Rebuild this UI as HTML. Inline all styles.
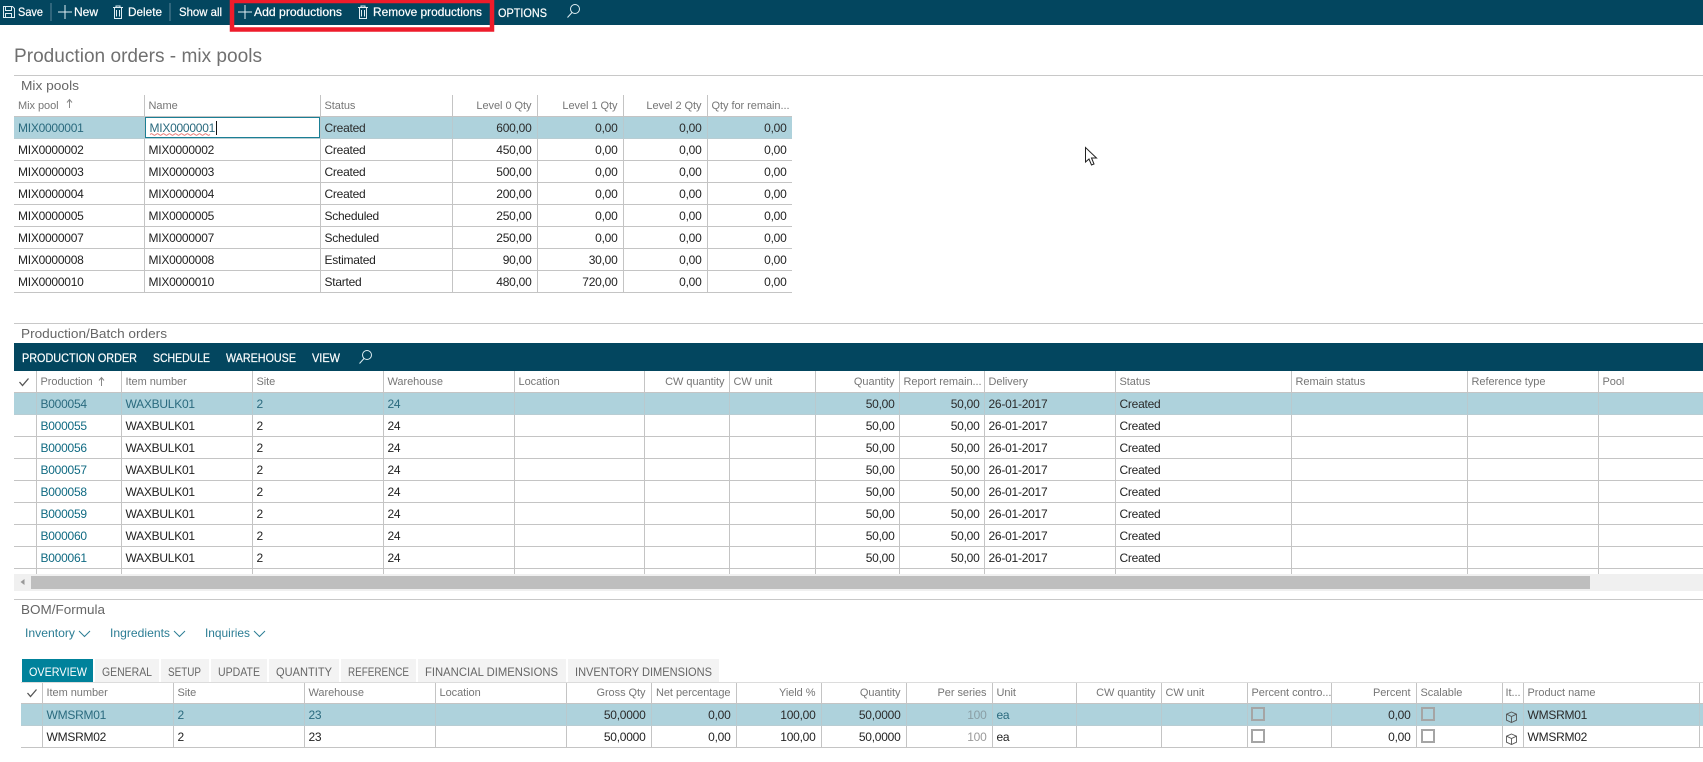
<!DOCTYPE html>
<html><head><meta charset="utf-8"><title>Production orders - mix pools</title>
<style>
html,body{margin:0;padding:0;width:1703px;height:762px;overflow:hidden;background:#fff;font-family:"Liberation Sans",sans-serif}
.w{position:absolute;overflow:hidden}
table{border-collapse:collapse;table-layout:fixed;font-size:12px;letter-spacing:-.25px;color:#222}
th{font-weight:normal;font-size:11px;letter-spacing:-.05px;color:#767676;text-align:left;height:21px;padding:0 5px 0 4px;border-right:1px solid #c4c4c4;border-bottom:1px solid #c4c4c4;white-space:nowrap;overflow:hidden}
td{height:20px;padding:1px 5px 0 4px;border-right:1px solid #c4c4c4;border-bottom:1px solid #c4c4c4;white-space:nowrap;overflow:hidden}
.b th{height:20px}
.b td{height:21px;padding-top:0}
.p .r{padding-right:4px}
.r{text-align:right}
.s td{background:#aed2dc;color:#2a6a7e;border-bottom-color:#b8cdd3;border-right-color:#b9c9ce}
.s td.k{color:#2a2a2a}
.l{color:#0f6a82}
.g{color:#9a9a9a}
.s .g{color:#8a9ea5}
svg{position:absolute;left:0;top:0}
</style></head><body>

<div class="w" style="left:14px;top:95px;width:778px;height:198px">
<table style="width:778px">
<col style="width:130px"><col style="width:176px"><col style="width:132px"><col style="width:85px"><col style="width:86px"><col style="width:84px"><col style="width:85px">
<tr><th>Mix pool</th><th>Name</th><th>Status</th><th class="r">Level 0 Qty</th><th class="r">Level 1 Qty</th><th class="r">Level 2 Qty</th><th class="r">Qty for remain...</th></tr>
<tr class="s"><td>MIX0000001</td><td style="background:#fff;box-shadow:inset 0 0 0 1px #1b7f95;color:#2a6a7e;padding-left:5px">MIX0000001</td><td class="k">Created</td><td class="r k">600,00</td><td class="r k">0,00</td><td class="r k">0,00</td><td class="r k">0,00</td></tr>
<tr><td>MIX0000002</td><td>MIX0000002</td><td>Created</td><td class="r">450,00</td><td class="r">0,00</td><td class="r">0,00</td><td class="r">0,00</td></tr>
<tr><td>MIX0000003</td><td>MIX0000003</td><td>Created</td><td class="r">500,00</td><td class="r">0,00</td><td class="r">0,00</td><td class="r">0,00</td></tr>
<tr><td>MIX0000004</td><td>MIX0000004</td><td>Created</td><td class="r">200,00</td><td class="r">0,00</td><td class="r">0,00</td><td class="r">0,00</td></tr>
<tr><td>MIX0000005</td><td>MIX0000005</td><td>Scheduled</td><td class="r">250,00</td><td class="r">0,00</td><td class="r">0,00</td><td class="r">0,00</td></tr>
<tr><td>MIX0000007</td><td>MIX0000007</td><td>Scheduled</td><td class="r">250,00</td><td class="r">0,00</td><td class="r">0,00</td><td class="r">0,00</td></tr>
<tr><td>MIX0000008</td><td>MIX0000008</td><td>Estimated</td><td class="r">90,00</td><td class="r">30,00</td><td class="r">0,00</td><td class="r">0,00</td></tr>
<tr><td>MIX0000010</td><td>MIX0000010</td><td>Started</td><td class="r">480,00</td><td class="r">720,00</td><td class="r">0,00</td><td class="r">0,00</td></tr>
</table></div>

<div class="w" style="left:14px;top:371px;width:1689px;height:203px">
<table class="p" style="width:1705px">
<col style="width:22px"><col style="width:85px"><col style="width:131px"><col style="width:131px"><col style="width:131px"><col style="width:130px"><col style="width:85px"><col style="width:86px"><col style="width:84px"><col style="width:85px"><col style="width:131px"><col style="width:176px"><col style="width:176px"><col style="width:131px"><col style="width:121px">
<tr><th></th><th>Production</th><th>Item number</th><th>Site</th><th>Warehouse</th><th>Location</th><th class="r">CW quantity</th><th>CW unit</th><th class="r">Quantity</th><th class="r">Report remain...</th><th>Delivery</th><th>Status</th><th>Remain status</th><th>Reference type</th><th>Pool</th></tr>
<tr class="s"><td></td><td>B000054</td><td>WAXBULK01</td><td>2</td><td>24</td><td></td><td></td><td></td><td class="r k">50,00</td><td class="r k">50,00</td><td class="k">26-01-2017</td><td class="k">Created</td><td></td><td></td><td></td></tr>
<tr><td></td><td class="l">B000055</td><td>WAXBULK01</td><td>2</td><td>24</td><td></td><td></td><td></td><td class="r">50,00</td><td class="r">50,00</td><td>26-01-2017</td><td>Created</td><td></td><td></td><td></td></tr>
<tr><td></td><td class="l">B000056</td><td>WAXBULK01</td><td>2</td><td>24</td><td></td><td></td><td></td><td class="r">50,00</td><td class="r">50,00</td><td>26-01-2017</td><td>Created</td><td></td><td></td><td></td></tr>
<tr><td></td><td class="l">B000057</td><td>WAXBULK01</td><td>2</td><td>24</td><td></td><td></td><td></td><td class="r">50,00</td><td class="r">50,00</td><td>26-01-2017</td><td>Created</td><td></td><td></td><td></td></tr>
<tr><td></td><td class="l">B000058</td><td>WAXBULK01</td><td>2</td><td>24</td><td></td><td></td><td></td><td class="r">50,00</td><td class="r">50,00</td><td>26-01-2017</td><td>Created</td><td></td><td></td><td></td></tr>
<tr><td></td><td class="l">B000059</td><td>WAXBULK01</td><td>2</td><td>24</td><td></td><td></td><td></td><td class="r">50,00</td><td class="r">50,00</td><td>26-01-2017</td><td>Created</td><td></td><td></td><td></td></tr>
<tr><td></td><td class="l">B000060</td><td>WAXBULK01</td><td>2</td><td>24</td><td></td><td></td><td></td><td class="r">50,00</td><td class="r">50,00</td><td>26-01-2017</td><td>Created</td><td></td><td></td><td></td></tr>
<tr><td></td><td class="l">B000061</td><td>WAXBULK01</td><td>2</td><td>24</td><td></td><td></td><td></td><td class="r">50,00</td><td class="r">50,00</td><td>26-01-2017</td><td>Created</td><td></td><td></td><td></td></tr>
<tr><td></td><td></td><td></td><td></td><td></td><td></td><td></td><td></td><td></td><td></td><td></td><td></td><td></td><td></td><td></td></tr>
</table></div>

<div class="w" style="left:21px;top:682px;width:1682px;height:68px;border-top:1px solid #dcdcdc;box-sizing:border-box">
<table class="b" style="width:1700px">
<col style="width:21px"><col style="width:131px"><col style="width:131px"><col style="width:131px"><col style="width:131px"><col style="width:85px"><col style="width:85px"><col style="width:85px"><col style="width:85px"><col style="width:86px"><col style="width:84px"><col style="width:85px"><col style="width:86px"><col style="width:84px"><col style="width:85px"><col style="width:86px"><col style="width:21px"><col style="width:176px"><col style="width:22px">
<tr><th></th><th>Item number</th><th>Site</th><th>Warehouse</th><th>Location</th><th class="r">Gross Qty</th><th class="r">Net percentage</th><th class="r">Yield %</th><th class="r">Quantity</th><th class="r">Per series</th><th>Unit</th><th class="r">CW quantity</th><th>CW unit</th><th>Percent contro...</th><th class="r">Percent</th><th>Scalable</th><th style="padding:0 3px">It...</th><th>Product name</th><th style="padding:0"></th></tr>
<tr class="s"><td></td><td>WMSRM01</td><td>2</td><td>23</td><td></td><td class="r k">50,0000</td><td class="r k">0,00</td><td class="r k">100,00</td><td class="r k">50,0000</td><td class="r g">100</td><td>ea</td><td></td><td></td><td></td><td class="r k">0,00</td><td></td><td style="padding:0"></td><td class="k">WMSRM01</td><td style="padding:0"></td></tr>
<tr><td></td><td>WMSRM02</td><td>2</td><td>23</td><td></td><td class="r">50,0000</td><td class="r">0,00</td><td class="r">100,00</td><td class="r">50,0000</td><td class="r g">100</td><td>ea</td><td></td><td></td><td></td><td class="r">0,00</td><td></td><td style="padding:0"></td><td>WMSRM02</td><td style="padding:0"></td></tr>
</table></div>

<svg width="1703" height="762" viewBox="0 0 1703 762" font-family="'Liberation Sans',sans-serif" font-size="12">
<!-- top bar -->
<rect width="1703" height="25" fill="#03465f"/>
<g fill="none" stroke="#dfeef3" stroke-width="1">
<path d="M3.5 6.5h9l2 2v9h-11z"/><path d="M5.5 6.5v4h6v-4M5.5 17.5v-4h6v4"/>
<path d="M58 12h14M65 5v14"/>
<path d="M113 7.5h10M116 7.5v-1.5h4v1.5M114.5 7.5v11h7v-11M116.5 10v6.5M119.5 10v6.5"/>
<path d="M238 12h14M245 5v14"/>
<path d="M358 7.5h10M361 7.5v-1.5h4v1.5M359.5 7.5v11h7v-11M361.5 10v6.5M364.5 10v6.5"/>
<circle cx="575" cy="9" r="4.5"/><path d="M572 12.5l-4.5 5"/>
</g>
<path d="M51 3v18M170 3v18" stroke="#5d8698" stroke-width="1"/>
<g fill="#fff" stroke="#fff" stroke-width=".2">
<text x="18" y="16" textLength="25" lengthAdjust="spacingAndGlyphs">Save</text>
<text x="74" y="16" textLength="24" lengthAdjust="spacingAndGlyphs">New</text>
<text x="128" y="16" textLength="34" lengthAdjust="spacingAndGlyphs">Delete</text>
<text x="179" y="16" textLength="43" lengthAdjust="spacingAndGlyphs">Show all</text>
<text x="254" y="16" textLength="88" lengthAdjust="spacingAndGlyphs">Add productions</text>
<text x="373" y="16" textLength="109" lengthAdjust="spacingAndGlyphs">Remove productions</text>
<text x="498" y="17" textLength="49" lengthAdjust="spacingAndGlyphs">OPTIONS</text>
</g>
<!-- red highlight -->
<rect x="230" y="25" width="264" height="2" fill="#fff"/>
<path d="M232 1h260v28.500h-260z" fill="none" stroke="#ee1c2b" stroke-width="4.500"/>
<!-- title/sections -->
<text x="14" y="62" font-size="19" fill="#707070" textLength="248" lengthAdjust="spacingAndGlyphs">Production orders - mix pools</text>
<rect x="14" y="75" width="1689" height="1" fill="#c8c8c8"/>
<text x="21" y="90" font-size="13" fill="#666" textLength="58" lengthAdjust="spacingAndGlyphs">Mix pools</text>
<path d="M69.500 108V100M67 102.500l2.500-3 2.500 3" fill="none" stroke="#888" stroke-width="1"/>
<!-- name field -->
<path d="M150 134.500q1.500-1.500 3 0t3 0 3 0 3 0 3 0 3 0 3 0 3 0 3 0 3 0 3 0 3 0 3 0 3 0 3 0 3 0 3 0 3 0 3 0 3 0 " fill="none" stroke="#e0504a" stroke-width=".8"/>
<rect x="216" y="121" width="1" height="14" fill="#111"/>
<!-- cursor -->
<path d="M1085.500 147.500v14.500l3.500-3 2.500 6 2.500-1-2.500-6h5z" fill="#fff" stroke="#222" stroke-width="1"/>
<!-- production section -->
<rect x="14" y="323" width="1689" height="1" fill="#c8c8c8"/>
<text x="21" y="338" font-size="13" fill="#666" textLength="146" lengthAdjust="spacingAndGlyphs">Production/Batch orders</text>
<rect x="14" y="343" width="1689" height="28" fill="#03465f"/>
<g fill="#fff" stroke="#fff" stroke-width=".2">
<text x="22" y="362" textLength="115" lengthAdjust="spacingAndGlyphs">PRODUCTION ORDER</text>
<text x="153" y="362" textLength="57" lengthAdjust="spacingAndGlyphs">SCHEDULE</text>
<text x="226" y="362" textLength="70" lengthAdjust="spacingAndGlyphs">WAREHOUSE</text>
<text x="312" y="362" textLength="28" lengthAdjust="spacingAndGlyphs">VIEW</text>
</g>
<g fill="none" stroke="#dfeef3"><circle cx="367" cy="355" r="4.500"/><path d="M364 358.500l-4.500 5"/></g>
<path d="M19.500 382l3 3.500 6-7" fill="none" stroke="#555" stroke-width="1.300"/>
<path d="M101.500 386v-8M99 380.500l2.500-3 2.500 3" fill="none" stroke="#888"/>
<!-- scrollbar -->
<rect x="14" y="574" width="1689" height="17" fill="#f0f0f0"/>
<rect x="31" y="576" width="1559" height="13" fill="#bebebe"/>
<path d="M24.500 579v6l-4-3z" fill="#999"/>
<!-- BOM -->
<rect x="14" y="599" width="1689" height="1" fill="#c8c8c8"/>
<text x="21" y="614" font-size="13" fill="#666" textLength="84" lengthAdjust="spacingAndGlyphs">BOM/Formula</text>
<g fill="#2b7d94">
<text x="25" y="637" textLength="50" lengthAdjust="spacingAndGlyphs">Inventory</text>
<text x="110" y="637" textLength="60" lengthAdjust="spacingAndGlyphs">Ingredients</text>
<text x="205" y="637" textLength="45" lengthAdjust="spacingAndGlyphs">Inquiries</text>
</g>
<g fill="none" stroke="#2b7d94"><path d="M79 631l5.500 5.500 5.500-5.500M174 631l5.500 5.500 5.500-5.500M254 631l5.500 5.500 5.500-5.500"/></g>
<!-- tabs -->
<rect x="22" y="659" width="71" height="23" fill="#00829b"/>
<g fill="#f3f3f3">
<rect x="95" y="659" width="64" height="23"/><rect x="161" y="659" width="48" height="23"/><rect x="211" y="659" width="56" height="23"/><rect x="269" y="659" width="70" height="23"/><rect x="341" y="659" width="75" height="23"/><rect x="418" y="659" width="148" height="23"/><rect x="568" y="659" width="151" height="23"/>
</g>
<text x="29" y="676" fill="#fff" textLength="58" lengthAdjust="spacingAndGlyphs">OVERVIEW</text>
<g fill="#666">
<text x="102" y="676" textLength="50" lengthAdjust="spacingAndGlyphs">GENERAL</text>
<text x="168" y="676" textLength="33" lengthAdjust="spacingAndGlyphs">SETUP</text>
<text x="218" y="676" textLength="42" lengthAdjust="spacingAndGlyphs">UPDATE</text>
<text x="276" y="676" textLength="56" lengthAdjust="spacingAndGlyphs">QUANTITY</text>
<text x="348" y="676" textLength="61" lengthAdjust="spacingAndGlyphs">REFERENCE</text>
<text x="425" y="676" textLength="133" lengthAdjust="spacingAndGlyphs">FINANCIAL DIMENSIONS</text>
<text x="575" y="676" textLength="137" lengthAdjust="spacingAndGlyphs">INVENTORY DIMENSIONS</text>
</g>
<path d="M27.500 693l3 3.500 6-7" fill="none" stroke="#555" stroke-width="1.300"/>
<!-- checkboxes -->
<g fill="none" stroke="#a5a5a5" stroke-width="2">
<rect x="1252" y="708" width="12" height="12"/><rect x="1422" y="708" width="12" height="12"/>
<rect x="1252" y="730" width="12" height="12"/><rect x="1422" y="730" width="12" height="12"/>
</g>
<!-- cube icons -->
<g fill="none" stroke="#555" stroke-width=".9">
<path d="M1511.500 712l5 2.200v6l-5 2.300-5-2.300v-6zM1506.500 714.200l5 2.300 5-2.300M1511.500 716.500v6"/>
<path d="M1511.500 734l5 2.200v6l-5 2.300-5-2.300v-6zM1506.500 736.200l5 2.300 5-2.300M1511.500 738.500v6"/>
</g>
</svg>
</body></html>
